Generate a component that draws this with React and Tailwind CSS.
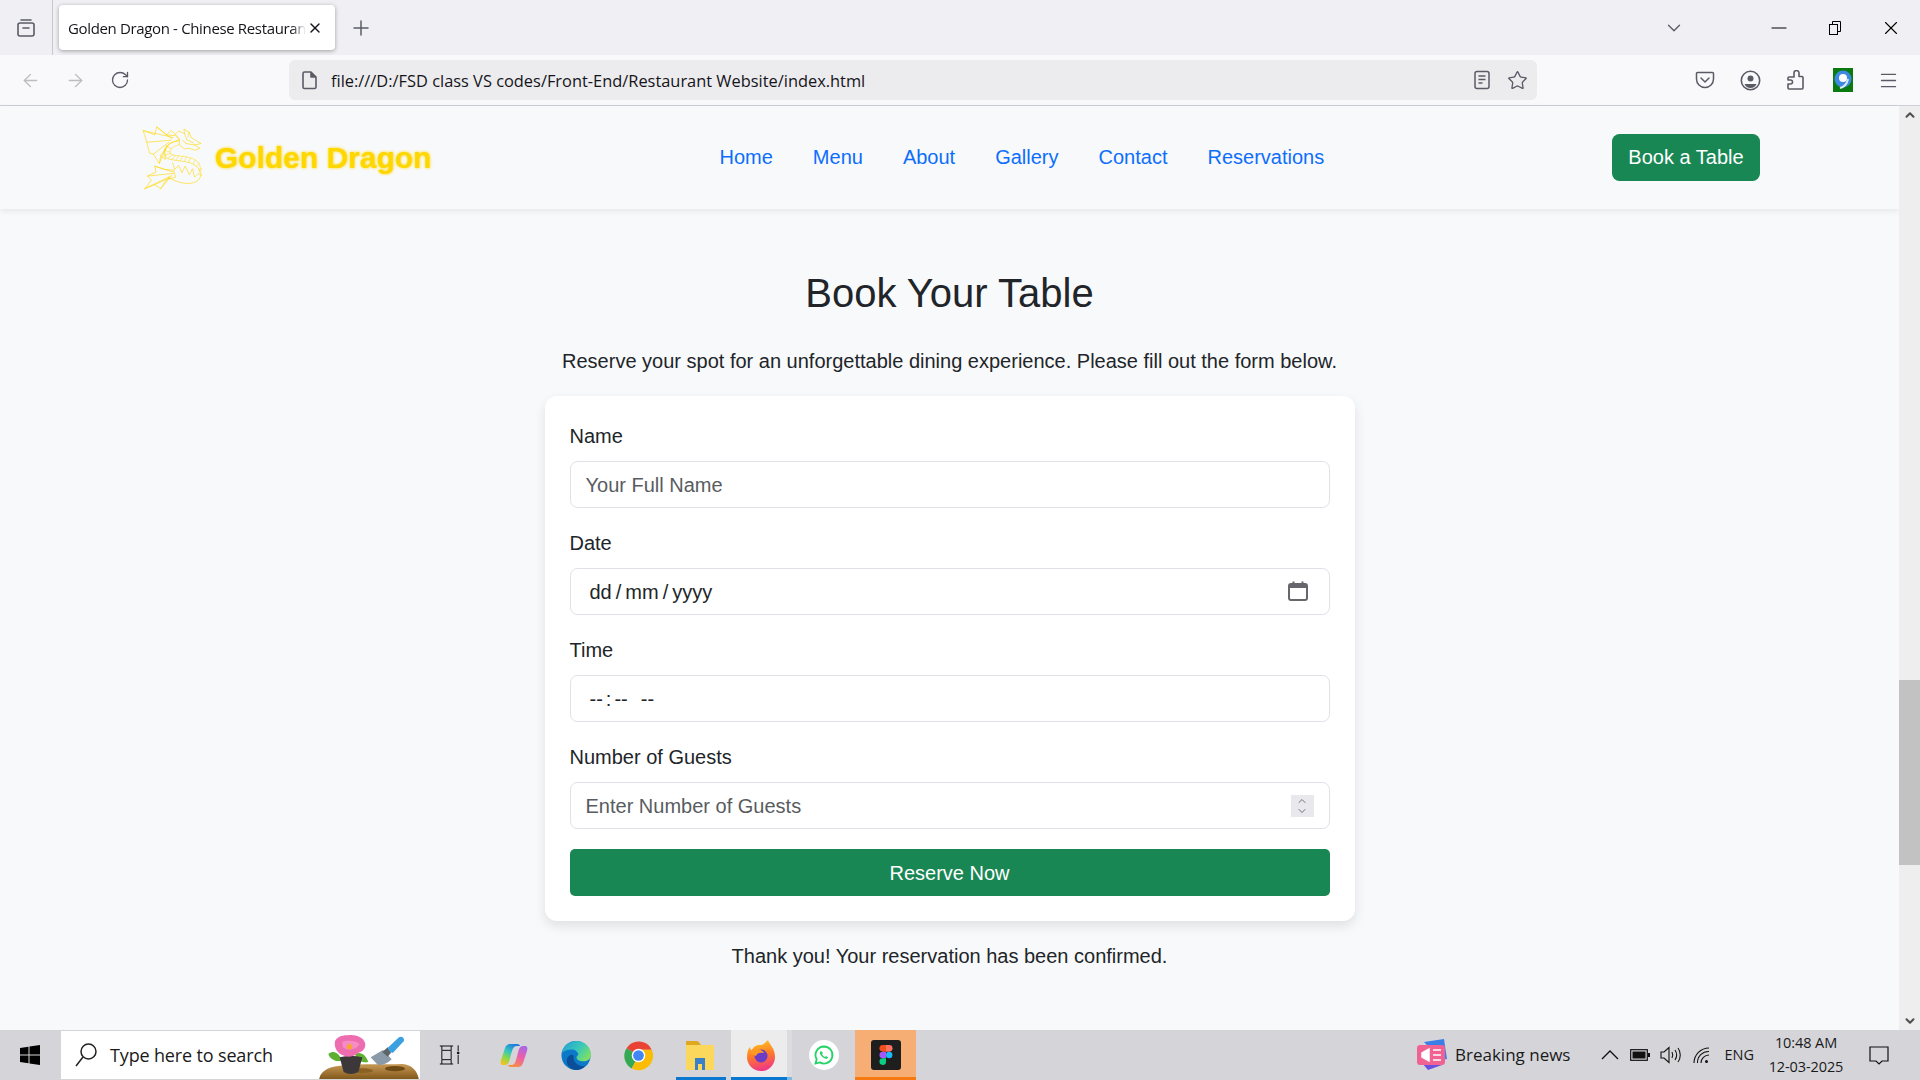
import React from "react"
import { ArrowLeft, ArrowRight, RotateCw, Plus, X, ChevronDown, ChevronUp, Star, Menu, Minus } from "lucide-react"

const uiFont = "font-['Open_Sans',sans-serif]"

function DragonLogo() {
  return (
    <svg width="62" height="65" viewBox="15 14 186 196" fill="none" stroke="#ffd700" strokeWidth="1.800" strokeLinejoin="round" strokeLinecap="round" className="shrink-0">
      {/* top wing */}
      <path d="M22 31 L56 44 L62 20 L92 44 L106 30 L118 42 L130 58 L100 70 L86 92 L88 118 L74 106 L70 130 L52 102 L40 98 L32 66 Z" />
      <path d="M112 52 L22 31 M108 56 L62 20 M104 60 L32 66 M98 66 L52 102 M92 76 L70 130 M90 84 L74 106 M116 46 L92 44" />
      {/* head */}
      <path d="M118 42 L128 32 L146 40 L144 26 L160 36 L166 52 L196 70 L176 74 L192 84 L178 90 L158 84 L146 86 L130 74 L130 58 Z" />
      <path d="M146 40 L152 58 L172 68 M160 36 L156 50 M150 70 L176 74 M140 60 L150 70" />
      {/* body */}
      <path d="M130 62 C100 64 82 82 84 102 C88 124 130 118 162 128 C196 140 206 168 182 184 C160 196 128 190 96 172" />
      <path d="M130 74 C112 76 100 86 102 98 C108 110 140 104 172 116 C202 130 198 160 176 170" opacity="0.800" />
      <path d="M92 78 L108 86 M86 90 L102 96 M88 104 L104 100 M98 112 L110 104 M110 116 L118 106 M122 118 L128 106 M134 120 L140 108 M146 122 L152 110 M158 126 L164 114 M172 130 L178 120 M182 138 L190 130 M188 150 L198 146 M188 162 L198 166" opacity="0.800" />
      <path d="M110 128 L116 148 L128 136 L138 158 L148 138 L160 164 L170 146 L176 170" />
      {/* bottom wing */}
      <path d="M112 150 L86 148 L56 138 L60 156 L34 168 L46 180 L26 206 L56 194 L74 206 L92 178 L118 172 Z" />
      <path d="M112 156 L56 138 M112 160 L34 168 M108 166 L26 206 M104 170 L74 206 M100 174 L56 194" />
    </svg>
  )
}

function TabManagerIcon() {
  return (
    <svg width="20" height="20" viewBox="0 0 20 20" fill="none" stroke="#5b5b66" strokeWidth="1.600">
      <rect x="2" y="5" width="16" height="13" rx="2" />
      <path d="M5 2h10M7 10h6" strokeLinecap="round" />
    </svg>
  )
}

function PageIcon() {
  return (
    <svg width="17" height="20" viewBox="0 0 17 20" fill="none" stroke="#5b5b66" strokeWidth="1.600" strokeLinejoin="round">
      <path d="M3.500 2H10l5 5v10a1.500 1.500 0 0 1-1.500 1.500h-10A1.500 1.500 0 0 1 2 17V3.500A1.500 1.500 0 0 1 3.500 2z" />
      <path d="M10 2v5h5" fill="#5b5b66" />
    </svg>
  )
}

function ReaderIcon() {
  return (
    <svg width="16" height="20" viewBox="0 0 16 20" fill="none" stroke="#5b5b66" strokeWidth="1.500">
      <rect x="1" y="1.500" width="14" height="17" rx="2" />
      <path d="M4.500 6h7M4.500 9.500h7M4.500 13h4" />
    </svg>
  )
}

function PocketIcon() {
  return (
    <svg width="20" height="20" viewBox="0 0 20 20" fill="none" stroke="#5b5b66" strokeWidth="1.500" strokeLinecap="round" strokeLinejoin="round">
      <path d="M2.500 2.500h15a1 1 0 0 1 1 1V9a8.500 8.500 0 0 1-17 0V3.500a1 1 0 0 1 1-1z" />
      <path d="M6 8l4 4 4-4" />
    </svg>
  )
}

function AccountIcon() {
  return (
    <svg width="21" height="21" viewBox="0 0 21 21" fill="none">
      <circle cx="10.500" cy="10.500" r="9.200" stroke="#5b5b66" strokeWidth="1.600" />
      <circle cx="10.500" cy="8.500" r="3" fill="#5b5b66" />
      <path d="M4.500 14h12a6.500 6.500 0 0 1-12 0z" fill="#5b5b66" />
    </svg>
  )
}

function PuzzleIcon() {
  return (
    <svg width="19" height="20" viewBox="0 0 19 20" fill="none" stroke="#5b5b66" strokeWidth="1.600" strokeLinejoin="round">
      <path d="M8 4.500V3a2.500 2.500 0 0 1 5 0v3.500h3a1 1 0 0 1 1 1V18a1 1 0 0 1-1 1H3a1 1 0 0 1-1-1v-4h2.500a2 2 0 0 0 0-4H2V8a1 1 0 0 1 1-1h5z" />
    </svg>
  )
}

function ExtensionBadge() {
  return (
    <svg width="20" height="24" viewBox="0 0 20 24">
      <rect width="20" height="24" fill="#0a7a10" />
      <circle cx="10" cy="11" r="8.500" fill="#3f8ae0" />
      <circle cx="10" cy="10" r="4" fill="#fff" />
      <path d="M7 20c4-1 7-4 8-9" stroke="#d8e8f8" strokeWidth="2" fill="none" />
    </svg>
  )
}

function RestoreIcon() {
  return (
    <svg width="12" height="14" viewBox="0 0 12 14" fill="none" stroke="#000" strokeWidth="1">
      <rect x="0.500" y="3.500" width="8" height="10" />
      <path d="M3.500 3.500V0.500h8v10h-3" />
    </svg>
  )
}

function NavBar() {
  const links = ["Home", "Menu", "About", "Gallery", "Contact", "Reservations"]
  return (
    <nav className="h-[103px] shrink-0 bg-[#f8f9fa] shadow-[0_2px_6px_rgba(0,0,0,0.08)] flex items-center pl-[141px] pr-[139px] pb-[1px]">
      <div className="flex items-center gap-[12px] w-[578.500px]">
        <DragonLogo />
        <span className="text-[30px] font-bold text-[#ffd700] [text-shadow:0_0_3px_#ffd700]">Golden Dragon</span>
      </div>
      <div className="flex gap-[40px] text-[20px] text-[#0d6efd]">
        {links.map((l) => (
          <a key={l}>{l}</a>
        ))}
      </div>
      <button className="ml-auto h-[47px] w-[148px] rounded-[7.5px] bg-[#198754] text-[20px] text-white">Book a Table</button>
    </nav>
  )
}

function Field({ label, children }) {
  return (
    <div className="mb-[20px]">
      <label className="block text-[20px] leading-[30px] mb-[10px]">{label}</label>
      <div className="h-[47px] rounded-[7.5px] border border-[#dee2e6] bg-white flex items-center px-[15px] text-[20px]">
        {children}
      </div>
    </div>
  )
}

function ReservationForm() {
  return (
    <div className="w-[810px] rounded-[12px] bg-white shadow-[0_5px_12px_rgba(0,0,0,0.1)] p-[25px]">
      <Field label="Name">
        <input placeholder="Your Full Name" className="w-full outline-none placeholder:text-[#595c5f]" />
      </Field>
      <Field label="Date">
        <span className="pl-[4px] flex-1 flex gap-[4px]">
          <span>dd</span>
          <span>/</span>
          <span>mm</span>
          <span>/</span>
          <span>yyyy</span>
        </span>
        <svg width="20" height="20" viewBox="0 0 20 20" fill="none" className="mr-[6px] -mt-[1px]">
          <rect x="1" y="3" width="18" height="16" rx="2" stroke="#66666c" strokeWidth="2" />
          <path d="M1 3h18v4H1z" fill="#66666c" />
          <path d="M5.500 0.500v4M14.500 0.500v4" stroke="#66666c" strokeWidth="2" />
        </svg>
      </Field>
      <Field label="Time">
        <span className="pl-[4px] mt-[1px] flex">
          <span>--</span>
          <span className="mx-[3px]">:</span>
          <span>--</span>
          <span className="ml-[13px]">--</span>
        </span>
      </Field>
      <Field label="Number of Guests">
        <input placeholder="Enter Number of Guests" className="w-full outline-none placeholder:text-[#595c5f]" />
        <span className="w-[23px] h-[22px] bg-[#e9e9ed] flex flex-col items-center justify-center shrink-0 mr-[0px]">
          <ChevronUp size={14} color="#6f6f7b" strokeWidth={2} className="-mb-[2px]" />
          <ChevronDown size={14} color="#6f6f7b" strokeWidth={2} />
        </span>
      </Field>
      <button className="w-full h-[47px] block rounded-[5px] bg-[#198754] text-[20px] text-white">Reserve Now</button>
    </div>
  )
}

function Scrollbar() {
  return (
    <div className="w-[21px] shrink-0 bg-[#eeeeee] flex flex-col items-center py-[2px]">
      <ChevronUp size={14} strokeWidth={3.500} color="#505050" />
      <div className="w-full h-[185px] bg-[#c2c2c2] mt-[558px]" />
      <ChevronDown size={14} strokeWidth={3.500} color="#505050" className="mt-auto" />
    </div>
  )
}

function BrowserChrome() {
  return (
    <div className={`shrink-0 ${uiFont}`}>
      <div className="h-[55px] bg-[#f0f0f4] flex items-center">
        <div className="w-[53px] h-full border-r border-[#c8c8cc] flex items-center justify-center">
          <TabManagerIcon />
        </div>
        <div className="ml-[6px] w-[276px] h-[45px] bg-white rounded-[4px] shadow-[0_1px_4px_rgba(0,0,0,0.35)] flex items-center pl-[9px] pr-[12px] text-[15px] tracking-[-0.35px] text-[#15141a]">
          <span className="mt-[1px] whitespace-nowrap [mask-image:linear-gradient(to_right,black_94%,transparent)]">Golden Dragon - Chinese Restauran</span>
          <X size={16} strokeWidth={2} className="ml-auto" color="#15141a" />
        </div>
        <Plus size={24} strokeWidth={1.500} color="#5b5b66" className="ml-[14px]" />
        <div className="ml-auto flex items-center">
          <ChevronDown size={22} strokeWidth={1.500} color="#5b5b66" className="mr-[82px]" />
          <Minus size={24} strokeWidth={1.200} color="#000" className="mr-[38px]" />
          <RestoreIcon />
          <X size={22} strokeWidth={1.200} color="#000" className="ml-[39px] mr-[18px]" />
        </div>
      </div>
      <div className="h-[51px] bg-[#f9f9fb] border-b border-[#cfcfd8] flex items-center">
        <ArrowLeft size={21} strokeWidth={1.600} color="#bcbcc2" className="ml-[20px]" />
        <ArrowRight size={21} strokeWidth={1.600} color="#bcbcc2" className="ml-[24px]" />
        <RotateCw size={20} strokeWidth={1.600} color="#5b5b66" className="ml-[24px]" />
        <div className="ml-[159px] w-[1248px] h-[40px] rounded-[6px] bg-[#ececee] flex items-center pl-[12px] pr-[9px]">
          <PageIcon />
          <span className="ml-[13px] mt-[2px] text-[16.400px] text-[#15141a] whitespace-nowrap">file:///D:/FSD class VS codes/Front-End/Restaurant Website/index.html</span>
          <span className="ml-auto mr-[17px]"><ReaderIcon /></span>
          <Star size={21} strokeWidth={1.500} color="#5b5b66" />
        </div>
        <div className="ml-[158px] flex items-center gap-[25px]">
          <PocketIcon />
          <AccountIcon />
          <PuzzleIcon />
          <span className="ml-[3px]"><ExtensionBadge /></span>
          <Menu size={21} strokeWidth={1.500} color="#5b5b66" />
        </div>
      </div>
    </div>
  )
}

function FlowerPot() {
  return (
    <svg width="100" height="48" viewBox="0 3 300 144" className="shrink-0">
      <defs>
        <linearGradient id="soil" x1="0" y1="0" x2="0" y2="1">
          <stop offset="0" stopColor="#c89a55" />
          <stop offset="1" stopColor="#7d5418" />
        </linearGradient>
      </defs>
      <path d="M0 150C4 122 30 108 80 106C130 100 190 104 250 102C280 104 296 124 300 150z" fill="url(#soil)" />
      <ellipse cx="228" cy="116" rx="30" ry="8" fill="#6e4a14" />
      <ellipse cx="130" cy="122" rx="32" ry="7" fill="#8a6122" />
      <path d="M28 72C45 58 62 70 68 92C52 96 34 90 28 72zM108 72C125 62 142 76 148 96C130 100 114 92 108 72z" fill="#5db030" />
      <path d="M62 82Q95 72 130 82L118 126Q95 138 74 126z" fill="#3c383a" />
      <path d="M48 34C52 20 74 14 88 16C104 12 132 20 138 38C142 52 132 66 118 68C106 80 84 84 72 76C56 72 44 52 48 34z" fill="#ee6cb0" />
      <path d="M70 36C80 30 110 30 122 42C112 60 86 64 72 52z" fill="#f58dc4" />
      <circle cx="92" cy="50" r="8" fill="#f7a52e" />
      <path d="M155 82L192 60L218 88C206 100 190 108 176 104z" fill="#8a9aa8" />
      <path d="M190 66L206 52L216 68L206 80z" fill="#5e6468" />
      <path d="M208 52L240 22C248 16 258 24 254 34L222 68C216 70 206 62 208 52z" fill="#3aa0e0" />
    </svg>
  )
}

function WindowsLogo() {
  return (
    <svg width="20" height="20" viewBox="0 0 20 20" fill="#000">
      <path d="M0 3l8.500-1.200V9.500H0zM9.500 1.600L20 0v9.500H9.500zM0 10.500h8.500v7.700L0 17zM9.500 10.500H20V20L9.500 18.400z" />
    </svg>
  )
}

function TaskbarApps() {
  return (
    <div className="flex items-center h-full ml-[1px]">
      {/* task view */}
      <div className="w-[62px] h-full flex items-center justify-center pr-[5px]">
        <svg width="21" height="20" viewBox="28 44 62 60" fill="none" stroke="#111" strokeWidth="3">
          <path d="M30 47h40M30 101h40M36 47v12M64 47v12M36 89v12M64 89v12M36 60h28v28H36zM85 45v18M85 74v27" />
          <circle cx="85" cy="68" r="4" fill="#111" stroke="none" />
        </svg>
      </div>
      {/* copilot */}
      <div className="w-[62px] h-full flex items-center justify-center">
        <svg width="28" height="25" viewBox="0 0 28 25">
          <defs>
            <linearGradient id="copL" x1="0.700" y1="0" x2="0.200" y2="1">
              <stop offset="0" stopColor="#1e78e0" />
              <stop offset="0.400" stopColor="#35c6c0" />
              <stop offset="0.700" stopColor="#8fd84a" />
              <stop offset="1" stopColor="#f5c21f" />
            </linearGradient>
            <linearGradient id="copR" x1="0.800" y1="0" x2="0.300" y2="1">
              <stop offset="0" stopColor="#a868e8" />
              <stop offset="0.500" stopColor="#ee5fa8" />
              <stop offset="1" stopColor="#f89040" />
            </linearGradient>
          </defs>
          <path d="M10 1h7c2 0 3 1 3 2l-3 0C14 3 13 5 12 8l-3 11c-1 2-2 3-4 3H3C1 22 0 20 1 17L5 5C6 2 8 1 10 1z" fill="url(#copL)" />
          <path d="M18 24h-7c-2 0-3-1-3-2l3 0c3 0 4-2 5-5l3-11c1-2 2-3 4-3h2c2 0 3 2 2 5l-4 12c-1 3-3 4-5 4z" fill="url(#copR)" />
        </svg>
      </div>
      {/* edge */}
      <div className="w-[62px] h-full flex items-center justify-center">
        <svg width="31" height="31" viewBox="0 0 32 32">
          <defs>
            <linearGradient id="edgeTop" x1="0" y1="0" x2="1" y2="0.600">
              <stop offset="0" stopColor="#1ea0d8" />
              <stop offset="0.600" stopColor="#3cc8b8" />
              <stop offset="1" stopColor="#7ade68" />
            </linearGradient>
          </defs>
          <circle cx="15.500" cy="16" r="15" fill="#0c78c8" />
          <path d="M1 13C3 4 10 1 16 1c9 0 15 7 15 14 0 5-4 7-8 7-4 0-7-2-7-4 0-1 1-2 2-3-1-4-5-6-9-5-4 0-6 2-8 3z" fill="url(#edgeTop)" />
          <path d="M13 16c-1 7 5 12 12 11-3 3-7 4-10 4-6-1-10-6-9-11 1-4 5-6 7-4z" fill="#0a4f98" />
        </svg>
      </div>
      {/* chrome */}
      <div className="w-[62px] h-full flex items-center justify-center">
        <svg width="31" height="31" viewBox="0 0 32 32">
          <path d="M16 16L3.600 8.500A15 15 0 0 1 29.700 10H16z" fill="#ea4335" />
          <path d="M16 16L9 29.500A15 15 0 0 1 3.600 8.500z" fill="#34a853" />
          <path d="M16 10h13.700A15 15 0 0 1 9 29.500L16 16z" fill="#fbbc05" />
          <circle cx="16" cy="16" r="7" fill="#fff" />
          <circle cx="16" cy="16" r="5.500" fill="#4285f4" />
        </svg>
      </div>
      {/* files */}
      <div className="relative w-[62px] h-full flex items-center justify-center">
        <svg width="30" height="31" viewBox="0 0 30 31">
          <path d="M1 1h12l3 4H1z" fill="#e0a820" />
          <path d="M1 5h28v25H1z" fill="#fbd75b" />
          <path d="M10 18h10v12h-3v-6h-4v6h-3z" fill="#3a80c8" />
        </svg>
        <div className="absolute bottom-0 left-[7px] right-[5px] h-[3px] bg-[#0a78d0]" />
      </div>
      {/* firefox */}
      <div className="relative w-[61px] h-full flex">
        <div className="w-[56px] h-full bg-[#ececec] flex items-center justify-center pl-[4px]">
          <svg width="30" height="32" viewBox="0 0 30 32">
            <defs>
              <linearGradient id="fox" x1="0.300" y1="0" x2="0.500" y2="1">
                <stop offset="0" stopColor="#ffc820" />
                <stop offset="0.500" stopColor="#ff7a28" />
                <stop offset="1" stopColor="#f0348a" />
              </linearGradient>
            </defs>
            <path d="M22 1c1 4 7 8 7 17a14 14 0 0 1-28 0c0-4 1-8 3-10 0 2 1 3 2 3 1-3 4-5 8-5 3 0 5-2 8-5z" fill="url(#fox)" />
            <circle cx="15" cy="17" r="6.500" fill="#6b3cc8" />
            <path d="M6 11c4-2 10-1 12 3-4-1-7 0-8 3L5 15z" fill="#ff9a20" />
          </svg>
        </div>
        <div className="w-[5px] h-full bg-[#dcdce0]" />
        <div className="absolute bottom-0 left-0 w-[56px] h-[3px] bg-[#0a78d0]" />
        <div className="absolute bottom-0 left-[56px] w-[5px] h-[3px] bg-[#7ab8e8]" />
      </div>
      {/* whatsapp */}
      <div className="w-[63px] h-full flex items-center justify-center">
        <svg width="30" height="30" viewBox="0 0 30 30">
          <circle cx="15" cy="15" r="15" fill="#fff" />
          <path d="M15 6.500a8.500 8.500 0 0 0-7.300 12.800L6.500 23.500l4.300-1.100A8.500 8.500 0 1 0 15 6.500z" fill="none" stroke="#25d366" strokeWidth="1.800" />
          <path d="M12 11c-2 1-1 4 1.500 6s5 2.500 5.500 0.500l-2-1.500-1 1c-1-.5-2.500-1.500-3-3l1-1z" fill="#25d366" />
        </svg>
      </div>
      {/* figma */}
      <div className="relative w-[61px] h-full bg-[#f7ae74] flex items-center justify-center">
        <div className="w-[30px] h-[30px] rounded-[3px] bg-[#1e1e1e] flex items-center justify-center">
          <svg width="14" height="20" viewBox="0 0 15 22">
            <path d="M7.500 0H4a3.500 3.500 0 0 0 0 7.300h3.500z" fill="#f24e1e" />
            <path d="M7.500 0H11a3.500 3.500 0 0 1 0 7.300H7.500z" fill="#ff7262" />
            <path d="M7.500 7.300H4a3.500 3.500 0 0 0 0 7.300h3.500z" fill="#a259ff" />
            <circle cx="11" cy="11" r="3.500" fill="#1abcfe" />
            <path d="M7.500 14.700H4A3.600 3.600 0 1 0 7.500 18.300z" fill="#0acf83" />
          </svg>
        </div>
        <div className="absolute bottom-0 left-0 right-0 h-[3px] bg-[#f77a10]" />
      </div>
    </div>
  )
}

function Taskbar() {
  return (
    <div className={`h-[50px] shrink-0 bg-[#d5d5d9] flex items-stretch ${uiFont} text-[#1a1a1a]`}>
      <div className="w-[61px] flex items-center justify-center pr-[2px]">
        <WindowsLogo />
      </div>
      <div className="w-[359px] my-[1px] bg-white flex items-center pl-[13px] overflow-hidden">
        <svg width="24" height="26" viewBox="0 0 24 26" fill="none" stroke="#222" strokeWidth="1.500">
          <circle cx="14.500" cy="9.500" r="7.500" />
          <path d="M9 15L2 24" />
        </svg>
        <span className="ml-[12px] text-[18px] tracking-[-0.15px]">Type here to search</span>
        <span className="ml-auto self-end flex pr-[1px]"><FlowerPot /></span>
      </div>
      <TaskbarApps />
      <div className="ml-auto flex items-center">
        <svg width="32" height="32" viewBox="0 0 32 32">
          <path d="M8 3l20-3 3 20-6 1z" fill="#3a7ee8" />
          <path d="M6 24l20 2-14 5z" fill="#6a4fe0" />
          <rect x="1" y="6" width="28" height="20" rx="3" fill="#ef6292" />
          <path d="M6 14l7-4v12l-7-4zM17 11h8M17 16h8M17 21h8" fill="#fff" stroke="#fff" strokeWidth="1.500" />
        </svg>
        <span className="ml-[7px] text-[17px]">Breaking news</span>
        <svg width="18" height="10" viewBox="0 0 18 10" fill="none" stroke="#111" strokeWidth="1.300" className="ml-[31px]">
          <path d="M1 9l8-8 8 8" />
        </svg>
        <svg width="20" height="12" viewBox="0 0 20 12" fill="none" className="ml-[11px]">
          <rect x="0.700" y="0.700" width="16.600" height="10.600" stroke="#111" strokeWidth="1.200" />
          <rect x="2.500" y="2.500" width="13" height="7" fill="#111" />
          <path d="M18 4h2v4h-2z" fill="#111" />
        </svg>
        <svg width="21" height="18" viewBox="0 0 21 18" fill="none" stroke="#111" strokeWidth="1.100" className="ml-[10px]">
          <path d="M1 6h3l5-4.500v15L4 12H1zM12 6c1 2 1 4 0 6M15 4c2 3 2 7 0 10M18 2c3 4 3 10 0 14" />
        </svg>
        <svg width="17" height="17" viewBox="0 0 17 17" fill="none" stroke="#111" strokeWidth="1.100" className="ml-[12px]">
          <path d="M1 16A15 15 0 0 1 16 1M4.500 16A11 11 0 0 1 16 4.500M8 16a8 8 0 0 1 8-8" />
          <circle cx="13.500" cy="14.500" r="1.500" fill="#111" stroke="none" />
        </svg>
        <span className="ml-[14px] text-[14.500px]">ENG</span>
        <div className="ml-[14px] w-[76px] text-center text-[14.500px] leading-[24px] tracking-[-0.1px] whitespace-nowrap">
          <div>10:48 AM</div>
          <div>12-03-2025</div>
        </div>
        <svg width="20" height="19" viewBox="0 0 20 19" fill="none" stroke="#111" strokeWidth="1.200" className="ml-[25px] mr-[31px]">
          <path d="M1 1h18v14h-6l-3 3-3-3H1z" />
        </svg>
      </div>
    </div>
  )
}

export default function App() {
  return (
    <div className="h-screen w-full overflow-hidden flex flex-col font-['Liberation_Sans',Arial,sans-serif] text-[#212529]">
      <BrowserChrome />
      <div className="flex-1 flex min-h-0">
        <main className="flex-1 min-w-0 flex flex-col bg-[#f8f9fa]">
          <NavBar />
          <section className="flex flex-col items-center pt-[60px]">
            <h1 className="text-[40px] leading-[48px] mb-[29px]">Book Your Table</h1>
            <p className="text-[20px] leading-[30px] mb-[20px]">Reserve your spot for an unforgettable dining experience. Please fill out the form below.</p>
            <ReservationForm />
            <p className="text-[20px] leading-[30px] mt-[20px]">Thank you! Your reservation has been confirmed.</p>
          </section>
        </main>
        <Scrollbar />
      </div>
      <Taskbar />
    </div>
  )
}
